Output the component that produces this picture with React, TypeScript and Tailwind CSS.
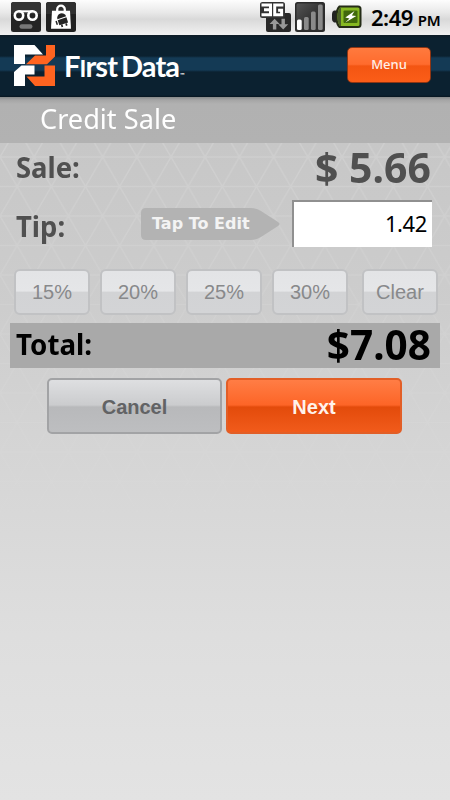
const tips = ["15%", "20%", "25%", "30%"];

const tipButton =
  "h-[46px] w-[76px] rounded-[6px] border-2 border-[#c1c2c4] bg-[linear-gradient(#e3e4e6_0%,#e5e6e8_48%,#d2d3d5_50%,#d3d4d6_100%)] font-['Liberation_Sans',sans-serif] text-[20px] leading-none text-[#88898b]";

function StatusBar() {
  return (
    <div className="flex h-[35px] items-start bg-[linear-gradient(#fdfdfd_0%,#e9e9e9_35%,#d9d9d9_55%,#f1f1f1_100%)] pt-[2px] pl-[11px]">
      <svg width="30" height="30" viewBox="0 0 30 30">
        <rect width="30" height="30" rx="2.5" fill="#242424" />
        <path d="M0 2.5A2.5 2.5 0 0 1 2.5 0h25A2.5 2.5 0 0 1 30 2.5V12H0Z" fill="#353535" />
        <g fill="none" stroke="#fff" strokeWidth="2.6">
          <circle cx="8" cy="13.5" r="4.2" />
          <circle cx="21.5" cy="13.5" r="4.2" />
          <path d="M8 9.3h13.4" strokeWidth="2" />
        </g>
        <rect x="8.5" y="22.3" width="13" height="4.5" rx="2.2" fill="#777" />
      </svg>
      <svg className="ml-[5px]" width="30" height="30" viewBox="0 0 30 30">
        <rect width="30" height="30" rx="2.5" fill="#202020" />
        <path d="M0 2.5A2.5 2.5 0 0 1 2.5 0h25A2.5 2.5 0 0 1 30 2.5V12H0Z" fill="#303030" />
        <path d="M11.2 10V7.5a3.8 3.8 0 0 1 7.6 0V10" fill="none" stroke="#fff" strokeWidth="2.3" />
        <path d="M6 8.7h18l1 18H5Z" fill="#fff" />
        <g fill="#242424" transform="translate(1 -.5) rotate(-18 15 18)">
          <path d="M10.7 16.3a4.6 4.4 0 0 1 9.2 0Z" />
          <path d="M10.7 17.3h9.2v5.4h-9.2ZM8.2 17.5h1.5v4H8.2ZM12.2 23h1.7v2.3h-1.7ZM16.8 23h1.7v2.3h-1.7Z" />
        </g>
      </svg>
      <svg className="ml-[184px]" width="31" height="30" viewBox="0 0 31 30">
        <rect x="6" y="11" width="25" height="19" rx="2" fill="#292929" />
        <rect x="0" y="0" width="25" height="16" rx="2.5" fill="#333" />
        <g fill="none" stroke="#fff" strokeWidth="3">
          <path d="M1.5 2.9H10.5v9.8h-9M4 7.8h6" />
          <path d="M23.3 2.9h-8.6v9.8h6.9V8.3h-3.5" />
        </g>
        <path d="m14.6 16.8 5 5.2h-3.3v5.4h-3.4V22H9.6Z" fill="#999" />
        <path d="m23.2 27.4 5-5.2h-3.3v-5.4h-3.4v5.4h-3.3Z" fill="#999" />
      </svg>
      <svg className="ml-[4px]" width="30" height="30" viewBox="0 0 30 30">
        <defs>
          <linearGradient id="signal" x1="0" y1="0" x2="1" y2="1">
            <stop offset="0" stopColor="#555" />
            <stop offset=".6" stopColor="#303030" />
          </linearGradient>
        </defs>
        <rect width="30" height="30" rx="2.5" fill="#2c2c2c" />
        <rect x="1.5" y="1.5" width="27" height="27" rx="1.5" fill="url(#signal)" />
        <rect x="2" y="17.5" width="4.7" height="10.5" rx="1.5" fill="#fff" />
        <rect x="9" y="15" width="4.7" height="13" rx="1.5" fill="#8a8a8a" />
        <rect x="16" y="9.5" width="4.7" height="18.5" rx="1.5" fill="#8a8a8a" />
        <rect x="23" y="2.5" width="4.7" height="25.5" rx="1.5" fill="#8a8a8a" />
      </svg>
      <svg className="mt-[3px] ml-[7px]" width="30" height="24" viewBox="0 0 30 24">
        <path d="M5 5.5H2Q0 6 0 9v5q0 3 2 3.5h3Z" fill="#222" />
        <path d="M7 .5H26Q29.5 .5 29.5 4V19.5Q29.5 23 26 23H7Q3.5 20 3.5 11.7T7 .5Z" fill="#242b17" />
        <path d="M8 2.5H26Q27.5 2.5 27.5 4V19.5Q27.5 21 26 21H8Q5.5 18 5.5 11.7T8 2.5Z" fill="#86b822" />
        <path d="M8 2.5H9V21H8Q5.5 18 5.5 11.7T8 2.5Z" fill="#4a5e2a" />
        <rect x="11.5" y="5.5" width="14" height="12.5" rx="1" fill="#41680d" />
        <path d="m22.5 6-9.2 6.4 4.200 1.100-4.200 4.100 11-6.500-4.400-.7Z" fill="#fff" />
      </svg>
      <div className="ml-[9px] flex items-baseline font-['Noto_Sans',sans-serif] font-semibold leading-[31px] text-black">
        <span className="text-[22px] tracking-[-0.5px]">2:49</span>
        <span className="ml-[5px] text-[15px] tracking-[-0.3px]">PM</span>
      </div>
    </div>
  );
}

function Header() {
  return (
    <div className="flex h-[62px] items-start justify-between bg-[linear-gradient(#0e1c27_0px,#0b2130_4px,#0b2130_21px,#143a55_23px,#143a55_35px,#0b2130_37px,#0b2130_60px,#07151f_62px)] pr-[19px] pl-[14px]">
      <div className="flex items-start pt-[10px]">
        <svg width="42" height="42" viewBox="0 0 42 42">
          <path d="M0 0H20.5L29 9.5H11V19H0Z" fill="#fff" />
          <path d="M32 0H41V11.5L33 19.3H12L21 10.5H32Z" fill="#ff6420" />
          <path d="M0 41V27L7.5 20.5H20.5V29.5H11V41Z" fill="#fff" />
          <path d="M30.5 20.5H41V41H21L12.5 31.500H30.5Z" fill="#ff6420" />
        </svg>
        <div className="flex items-baseline pt-[5px] pl-[8px] font-['Lato',sans-serif] text-[29px] font-bold leading-[32px] tracking-[-0.9px] text-white">
          <span>F</span>
          <span className="text-[23px]">I</span>
          <span>rst</span>
          <span className="ml-[4px]">Data</span>
          <span className="ml-[1px] text-[6px] tracking-normal">™</span>
        </div>
      </div>
      <button className="mt-[12px] h-[36px] w-[84px] rounded-[5px] border border-[#8e3513] bg-[linear-gradient(#ff7a3e_0%,#ff6b2d_48%,#f35512_53%,#fb5d18_100%)] font-['Noto_Sans',sans-serif] text-[13px] font-medium text-[#fff0e8]">
        Menu
      </button>
    </div>
  );
}

// Faint triangular lattice that dissolves towards the bottom of the page.
function Lattice() {
  return (
    <svg className="absolute inset-x-0 top-0 -z-10" width="450" height="470" viewBox="0 143 450 470">
      <defs>
        <pattern id="lattice" x="0" y="157" width="34.2" height="59" patternUnits="userSpaceOnUse">
          <path
            d="M0 0H34.2M0 29.5H34.2M0 0 34.2 59M34.2 0 0 59M0 59H34.2"
            fill="none"
            stroke="#fff"
            strokeWidth="1.5"
          />
        </pattern>
        <linearGradient id="fade" x1="0" y1="0" x2="0" y2="1">
          <stop offset="0" stopColor="#fff" stopOpacity=".14" />
          <stop offset=".35" stopColor="#fff" stopOpacity=".08" />
          <stop offset="1" stopColor="#fff" stopOpacity="0" />
        </linearGradient>
        <mask id="fadeMask">
          <rect y="143" width="450" height="470" fill="url(#fade)" />
        </mask>
      </defs>
      <rect y="143" width="450" height="470" fill="url(#lattice)" mask="url(#fadeMask)" />
    </svg>
  );
}

export default function App() {
  return (
    <div className="flex h-[800px] w-[450px] flex-col overflow-hidden font-['Noto_Sans',sans-serif]">
      <StatusBar />
      <Header />
      <div className="h-[46px] bg-[linear-gradient(#87898a_0px,#a5a5a5_3px,#b1b1b1_7px,#b2b2b2_100%)] pl-[40px] text-[28px] leading-[43px] text-white">
        <span className="inline-block origin-left scale-x-[0.97]">Credit Sale</span>
      </div>

      <div className="relative isolate flex-1 bg-[linear-gradient(#c7c7c7_0%,#cdcdcd_25%,#d5d5d5_47%,#dedede_75%,#e3e3e3_100%)]">
        <Lattice />
        <div className="flex h-[49px] items-center justify-between pr-[19px] pl-[16px] font-bold text-[#505050]">
          <span className="origin-left scale-x-[0.98] pb-[2px] text-[28px]">Sale:</span>
          <span className="origin-right scale-x-[0.975] pb-[2px] text-[42px] leading-[47px]">$ 5.66</span>
        </div>

        <div className="mt-[8px] flex h-[47px] items-center pr-[18px] pl-[16px]">
          <span className="w-[125px] origin-left scale-x-[0.98] pt-[4px] text-[28px] font-bold text-[#505050]">Tip:</span>
          <div className="relative isolate flex h-[32px] w-[139px] items-center pl-[11px] font-['DejaVu_Sans',sans-serif] text-[16px] font-bold text-[#f3f3f3]">
            <svg className="absolute inset-0 -z-10" width="139" height="32" viewBox="0 0 139 32">
              <path d="M5 0H110Q115 0 120 3L137 14Q140 16 137 18L120 29Q115 32 110 32H5Q0 32 0 27V5Q0 0 5 0Z" fill="#b3b3b3" />
            </svg>
            <span className="whitespace-nowrap">Tap To Edit</span>
          </div>
          <input
            className="ml-auto h-[47px] w-[140px] border-t-2 border-l-2 border-[#909090] bg-white pr-[5px] pb-[3px] text-right text-[22px] tracking-[-0.4px] text-black outline-none"
            defaultValue="1.42"
          />
        </div>

        <div className="mt-[22px] flex pl-[14px]">
          <div className="flex gap-[10px]">
            {tips.map((tip) => (
              <button key={tip} className={tipButton}>
                {tip}
              </button>
            ))}
          </div>
          <button className={`ml-[14px] ${tipButton}`}>Clear</button>
        </div>

        <div className="mx-[10px] mt-[8px] flex h-[45px] items-center justify-between bg-[#a9a9a9] pr-[9px] pl-[6px] font-bold text-black">
          <span className="origin-left scale-x-[0.99] pb-[3px] text-[28px]">Total:</span>
          <span className="origin-right scale-x-[0.965] pb-[4px] text-[42px] leading-[41px]">$7.08</span>
        </div>

        <div className="mt-[10px] flex gap-[4px] pl-[47px] font-['Liberation_Sans',sans-serif] text-[20px] font-bold">
          <button className="h-[56px] w-[175px] rounded-[5px] border-2 border-[#a2a3a5] bg-[linear-gradient(#dedfe1_0%,#cbccce_48%,#b8b9bb_52%,#bdbec0_100%)] pt-[1px] text-[#626365]">
            Cancel
          </button>
          <button className="h-[56px] w-[176px] rounded-[5px] border-2 border-[#e25e26] bg-[linear-gradient(#ff7d45_0%,#fd6527_48%,#e34b0b_52%,#f15b1b_100%)] pt-[1px] text-[#fff3eb]">
            Next
          </button>
        </div>
      </div>
    </div>
  );
}
